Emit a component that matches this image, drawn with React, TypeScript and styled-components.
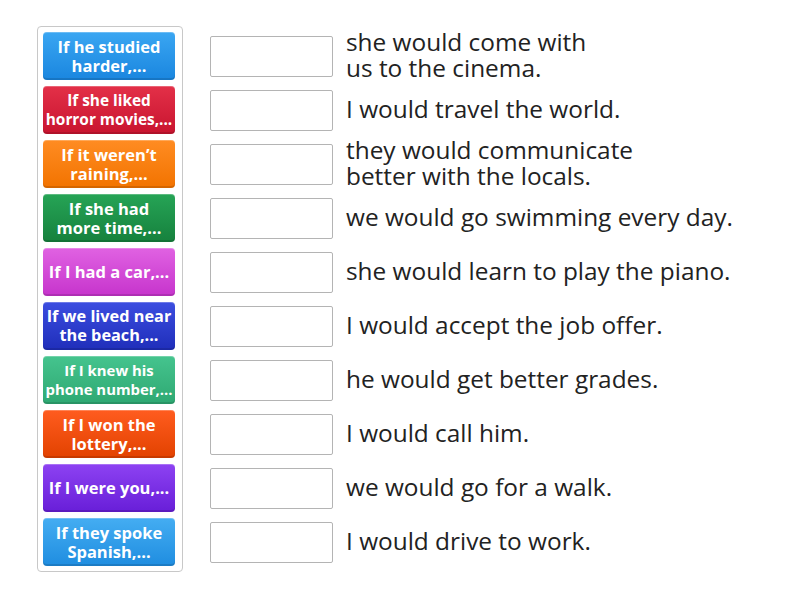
import React from 'react';
import styled, { createGlobalStyle } from 'styled-components';

const GlobalStyle = createGlobalStyle`
    body {
        margin: 0;
        background: #ffffff;
        font-family: "Open Sans", "Liberation Sans", sans-serif;
    }
`;

const Page = styled.div`
    display: flex;
    align-items: flex-start;
    padding: 26px 0 0 37px;
    gap: 27px;
`;

const Panel = styled.div`
    width: 132px;
    padding: 5px 7px 5px 5px;
    border: 1px solid #c8c8c8;
    border-radius: 4px;
    display: flex;
    flex-direction: column;
    gap: 6px;
`;

const Tile = styled.div<{ $top: string; $bottom: string; $size: number }>`
    height: 48px;
    border-radius: 4px;
    background: linear-gradient(to bottom, ${p => p.$top}, ${p => p.$bottom});
    box-shadow: inset 0 -2px 0 rgba(0, 0, 0, 0.12), inset 0 1px 0 rgba(255, 255, 255, 0.25);
    display: flex;
    align-items: center;
    justify-content: center;
    text-align: center;
    color: #ffffff;
    font-weight: 700;
    font-size: ${p => p.$size}px;
    line-height: 19.5px;
    padding: 0 1px;
    box-sizing: border-box;
    white-space: nowrap;
`;

const Answers = styled.div`
    padding-top: 6px;
    display: flex;
    flex-direction: column;
    gap: 6px;
`;

const Row = styled.div`
    height: 48px;
    display: flex;
    align-items: center;
    gap: 13px;
`;

const DropBox = styled.div`
    width: 121px;
    height: 39px;
    border: 1px solid #b4b4b4;
    border-radius: 2px;
    background: #ffffff;
    flex-shrink: 0;
`;

const Answer = styled.div`
    font-size: 24.4px;
    line-height: 26px;
    color: #222222;
    white-space: nowrap;
    margin-top: -2px;
`;

const prompts = [
    { text: ['If he studied', 'harder,...'], top: '#3aa6f2', bottom: '#1a86df', size: 16.5 },
    { text: ['If she liked', 'horror movies,...'], top: '#e33048', bottom: '#c8142f', size: 15.4 },
    { text: ['If it weren\u2019t', 'raining,...'], top: '#ff8c22', bottom: '#f27300', size: 16.5 },
    { text: ['If she had', 'more time,...'], top: '#26a456', bottom: '#16813d', size: 16.5 },
    { text: ['If I had a car,...'], top: '#e062e2', bottom: '#c634cc', size: 16.5 },
    { text: ['If we lived near', 'the beach,...'], top: '#3c4ee0', bottom: '#1f2eba', size: 16.3 },
    { text: ['If I knew his', 'phone number,...'], top: '#45c48e', bottom: '#2ea872', size: 14.9 },
    { text: ['If I won the', 'lottery,...'], top: '#ff5c1f', bottom: '#e24200', size: 16.5 },
    { text: ['If I were you,...'], top: '#8d42f2', bottom: '#681ed8', size: 16.5 },
    { text: ['If they spoke', 'Spanish,...'], top: '#44adf2', bottom: '#1f8de0', size: 16.5 },
];

const answers = [
    ['she would come with', 'us to the cinema.'],
    ['I would travel the world.'],
    ['they would communicate', 'better with the locals.'],
    ['we would go swimming every day.'],
    ['she would learn to play the piano.'],
    ['I would accept the job offer.'],
    ['he would get better grades.'],
    ['I would call him.'],
    ['we would go for a walk.'],
    ['I would drive to work.'],
];

const Lines: React.FC<{ lines: string[] }> = ({ lines }) => (
    <>
        {lines.map((l, i) => (
            <React.Fragment key={i}>
                {i > 0 && <br />}
                {l}
            </React.Fragment>
        ))}
    </>
);

const App: React.FC = () => {
    return (
        <>
            <GlobalStyle />
            <Page>
                <Panel>
                    {prompts.map((p, i) => (
                        <Tile key={i} $top={p.top} $bottom={p.bottom} $size={p.size}>
                            <div><Lines lines={p.text} /></div>
                        </Tile>
                    ))}
                </Panel>
                <Answers>
                    {answers.map((a, i) => (
                        <Row key={i}>
                            <DropBox />
                            <Answer><Lines lines={a} /></Answer>
                        </Row>
                    ))}
                </Answers>
            </Page>
        </>
    );
};

export default App;
